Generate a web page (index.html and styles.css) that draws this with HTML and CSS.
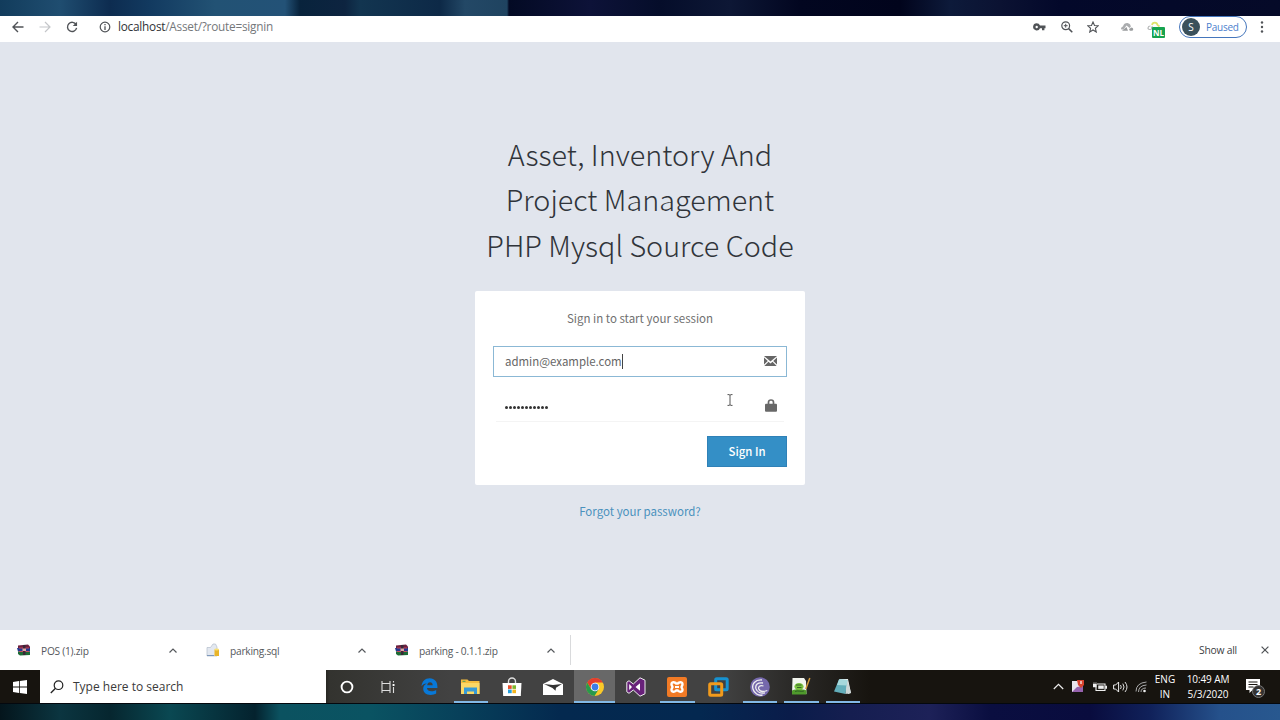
FILE: index.html
```html
<!DOCTYPE html>
<html lang="en">
<head>
<meta charset="utf-8">
<title>Sign in</title>
<link rel="stylesheet" href="styles.css">
</head>
<body>
<svg class="defs" width="0" height="0">
  <symbol id="chev" viewBox="0 0 10 10"><path d="M1.500 7.500 5 4 8.500 7.500" fill="none" stroke="#55585c" stroke-width="1.200"/></symbol>
  <symbol id="rar" viewBox="0 0 14 12">
    <path d="M1 1.500 11 .5 13 2.500V4H1z" fill="#6b2140"/><path d="M0 4h13v3.500H1z" fill="#24388f"/><path d="M1 7.500h12V11L3 11.500 1 10z" fill="#1d6b35"/>
    <path d="M2 4h10M2 7.500h10" stroke="#d0485c" stroke-width=".9"/><path d="M6 1h2.500v10H6z" fill="#3a2838"/><path d="M5.500 4.500h3.500v2.500H5.500z" fill="#e0a8a0"/>
  </symbol>
</svg>
<div class="screen">
  <div class="wallpaper-top"></div>

  <header class="toolbar">
    <nav class="nav">
      <svg width="12" height="12" viewBox="0 0 12 12"><path d="M11.500 6H1.200M6 1 1 6l5 5" fill="none" stroke="#505357" stroke-width="1.400"/></svg>
      <svg width="12" height="12" viewBox="0 0 12 12"><path d="M.5 6h10.300M6 1l5 5-5 5" fill="none" stroke="#c4c6c9" stroke-width="1.200"/></svg>
      <svg width="12" height="12" viewBox="0 0 13 13"><path d="M11 4A5 5 0 1 0 11.500 7.500" fill="none" stroke="#505357" stroke-width="1.500"/><path d="M12 .8V5.500H7.300z" fill="#505357"/></svg>
    </nav>
    <svg class="info" width="12" height="12" viewBox="0 0 12 12"><circle cx="6" cy="6" r="4.800" fill="none" stroke="#505357" stroke-width="1.200"/><path d="M6 5.300V9M6 3v1.300" stroke="#505357" stroke-width="1.300"/></svg>
    <div class="url"><span class="host">localhost</span>/Asset/?route=signin</div>
    <div class="actions">
      <svg class="key" width="13" height="8" viewBox="0 0 13 8"><path d="M3.700.3a3.600 3.600 0 1 0 3.300 5h2V7.300h2.400v-2H12.500V2.600H7A3.600 3.600 0 0 0 3.700.3zm0 2.500a1.200 1.200 0 1 1 0 2.400 1.200 1.200 0 0 1 0-2.400z" fill="#505357" fill-rule="evenodd"/></svg>
      <svg class="mag" width="12" height="12" viewBox="0 0 12 12"><circle cx="4.700" cy="4.700" r="3.900" fill="none" stroke="#505357" stroke-width="1.200"/><path d="m7.600 7.600 3.700 3.700" stroke="#505357" stroke-width="1.500"/><path d="M2.800 4.700h3.800M4.700 2.800v3.800" stroke="#505357" stroke-width="1"/></svg>
      <svg class="star" width="12" height="12" viewBox="0 0 24 24"><path d="m12 2 3 7 7.500.6-5.700 5L18.500 22 12 18l-6.500 4 1.700-7.400-5.700-5L9 9z" fill="none" stroke="#505357" stroke-width="2.200"/></svg>
      <svg class="cloud" width="14" height="10" viewBox="0 0 14 10"><path d="M3 4.500C3.500 1.800 6 .8 8 1.200c2 .4 2.800 2 2.800 3.600L9.500 6 6.500 3.500 3.500 7.500H2C.5 7.500.8 5 3 4.500z" fill="#aaacae"/><path d="M2 8.700h6L6.500 5zM9 7l2.500-1.500c2 .3 2.300 2.700.8 3.200H9.800z" fill="#9b9d9f"/></svg>
      <div class="nl-ext">
        <svg width="14" height="11" viewBox="0 0 14 11"><path d="M4.500 8.500h-2C.3 8.500.5 5 3.500 5M5 8C3.800 7 4.500 5.700 6 6" fill="none" stroke="#b4b6b7" stroke-width="1.200"/><path d="M5 4C5.500.8 10 .8 10.500 4l2 1.500" fill="none" stroke="#dfe36a" stroke-width="1.700"/></svg>
        <span class="nl-badge">NL</span>
      </div>
      <div class="profile"><span class="avatar">S</span><span class="paused">Paused</span></div>
      <svg class="kebab" width="4" height="12" viewBox="0 0 4 12"><g fill="#505357"><circle cx="2" cy="1.500" r="1.200"/><circle cx="2" cy="6" r="1.200"/><circle cx="2" cy="10.500" r="1.200"/></g></svg>
    </div>
  </header>

  <main class="page">
    <h1 class="title">
      <span>Asset, Inventory And</span>
      <span>Project Management</span>
      <span>PHP Mysql Source Code</span>
    </h1>
    <section class="card">
      <p class="lead">Sign in to start your session</p>
      <div class="field focused">
        <span class="value">admin@example.com</span><span class="caret"></span>
        <svg class="field-icon" width="13" height="10" viewBox="0 0 13 10"><path d="M0 0h13L6.500 5.600z" fill="#666"/><path d="M0 1.500 3.800 5 0 8.500zM13 1.500 9.200 5 13 8.500zM.3 10 4.500 5.700l2 1.700 2-1.700L12.700 10z" fill="#666"/></svg>
      </div>
      <div class="field password">
        <span class="dots"><i></i><i></i><i></i><i></i><i></i><i></i><i></i><i></i><i></i><i></i><i></i></span>
        <svg class="field-icon" width="12" height="13" viewBox="0 0 12 13"><path d="M3.500 5.500V3.200Q3.500 1 6 1t2.500 2.200v2.300" fill="none" stroke="#686868" stroke-width="1.700"/><rect y="4.800" width="12" height="8" rx="1" fill="#686868"/></svg>
        <svg class="ibeam" width="6" height="12" viewBox="0 0 6 12"><path d="M.5.6h1.700L3 1.300l.8-.7h1.700M3 1v10M.5 11.400h1.700l.8-.7.8.7h1.700" fill="none" stroke="#555" stroke-width="1"/></svg>
      </div>
      <button class="signin">Sign In</button>
    </section>
    <a class="forgot">Forgot your password?</a>
  </main>

  <div class="downloads">
    <div class="dl dl1"><svg width="14" height="12"><use href="#rar"/></svg><span>POS (1).zip</span><svg class="chev" width="10" height="10"><use href="#chev"/></svg></div>
    <div class="dl dl2"><svg width="14" height="14" viewBox="0 0 14 14"><path d="M1 4.500h3.500L7 1h2.500L11 4v9H1z" fill="#e3e8f0" stroke="#b3bdcb" stroke-width=".7"/><path d="M8.500 6.500h4.500V13H8.500z" fill="#e9b52a"/><ellipse cx="10.700" cy="6.500" rx="2.300" ry="1" fill="#f8df75"/><path d="M1 12.500h7" stroke="#7e98bb"/></svg><span>parking.sql</span><svg class="chev" width="10" height="10"><use href="#chev"/></svg></div>
    <div class="dl dl3"><svg width="14" height="12"><use href="#rar"/></svg><span>parking - 0.1.1.zip</span><svg class="chev" width="10" height="10"><use href="#chev"/></svg></div>
    <div class="showall">Show all</div>
    <svg class="close" width="8" height="8" viewBox="0 0 8 8"><path d="m.6.6 6.800 6.800M7.400.6.6 7.400" stroke="#505357" stroke-width="1.200"/></svg>
  </div>

  <footer class="taskbar">
    <div class="start"><svg width="14" height="14" viewBox="0 0 14 14"><path d="M0 2 6 1.100V6.600H0zM6.800 1 14 0v6.600H6.800zM0 7.400h6v5.500L0 12zM6.800 7.400H14V14L6.800 13z" fill="#fff"/></svg></div>
    <div class="search"><svg width="14" height="14" viewBox="0 0 14 14"><circle cx="8.500" cy="5.200" r="4.300" fill="none" stroke="#222" stroke-width="1.200"/><path d="M5.500 8.300.8 13" stroke="#222" stroke-width="1.300"/></svg><span>Type here to search</span></div>
    <div class="apps">
      <div class="app"><svg width="14" height="14" viewBox="0 0 14 14"><circle cx="7" cy="7" r="5.400" fill="none" stroke="#fff" stroke-width="1.900"/></svg></div>
      <div class="app"><svg width="15" height="14" viewBox="0 0 15 14"><path d="M1 1v2.500h8V1M1 13v-2.500h8V13M1 3.500v7M9 3.500v7M12.500 1v1.500M12.500 7v6" fill="none" stroke="#ddd" stroke-width="1.100"/><path d="M11.600 4h1.900v2h-1.900z" fill="#fff"/></svg></div>
      <div class="app"><svg width="17" height="17" viewBox="0 0 17 17"><path d="M.5 8.200C1 3.500 4 .3 8.700.3c5 0 7.700 3.700 7.700 8v1.800H6c.2 2.300 2 3.200 4.500 3.200 1.800 0 3.300-.5 4.700-1.300v3.600C13.700 16.500 12 17 9.700 17 5 17 2.200 14.500 2.200 10.800c0-2.500 1.400-4.300 3.500-5.300C3.500 5.300 1.700 6.500.5 8.200zM6.200 7.200h5.500c0-2-1-3-2.700-3S6.500 5.500 6.200 7.200z" fill="#0878d7" fill-rule="evenodd"/></svg></div>
      <div class="app open"><svg width="19" height="16" viewBox="0 0 19 16"><path d="M0 .5h6.500L8 2h10.500v13H0z" fill="#f5bd3e"/><path d="M0 4h18.500v11H0z" fill="#fbd866"/><path d="M3 15V8.500h13V15h-3v-2.500H6V15z" fill="#379bd6"/><path d="M1.500 2.300h3" stroke="#4b9c5b"/></svg></div>
      <div class="app"><svg width="20" height="20" viewBox="0 0 20 20"><path d="M6.500 7V4.500a3.500 3.500 0 0 1 7 0V7" fill="none" stroke="#ddd" stroke-width="1.400"/><path d="M.5 6h19l-.7 13H1.200z" fill="#fff"/><path d="M6 8.300h3.700v3.600H6z" fill="#e9502b"/><path d="M10.400 8.300H14v3.600h-3.600z" fill="#7db62e"/><path d="M6 12.600h3.700v3.600H6z" fill="#259fdd"/><path d="M10.400 12.600H14v3.600h-3.600z" fill="#f4b51e"/></svg></div>
      <div class="app"><svg width="20" height="16" viewBox="0 0 20 16"><path d="M0 5 10 0l10 5v11H0z" fill="#fff"/><path d="m1 5 9 1 9-1-6 3.700-.5 3-3-2.700z" fill="#333"/></svg></div>
      <div class="app open active"><svg width="18" height="18" viewBox="0 0 18 18"><circle cx="9" cy="9" r="9" fill="#fbc928"/><path d="M1.200 4.500A9 9 0 0 1 16.800 4.500H9L5 11z" fill="#e33e2f"/><path d="M1.200 4.500A9 9 0 0 0 8.500 18l4.200-6.800L9 13 5 11z" fill="#29994c"/><circle cx="9" cy="9" r="4.300" fill="#fff"/><circle cx="9" cy="9" r="3.400" fill="#3c7de6"/></svg></div>
      <div class="app"><svg width="20" height="20" viewBox="0 0 20 20"><path d="m14 .8 5 2.400v13.600l-5 2.400L7.300 13 3 16.300l-2.200-1.500V5.200L3 3.700 7.300 7z" fill="#68217a" stroke="#eee" stroke-width="1"/><path d="M3.200 7v6L6 10zM14 6.300 9.500 10l4.500 3.700z" fill="#fff"/></svg></div>
      <div class="app open"><svg width="20" height="20" viewBox="0 0 20 20"><rect width="20" height="20" rx="2" fill="#f17a25"/><g fill="none" stroke="#fff" stroke-width="2.400" stroke-linejoin="round"><path d="M10 7.500C8.500 4.500 4.500 4.500 4.500 7.200c0 1.600 1 1.800 1 2.800s-1 1.300-1 2.800c0 2.700 4 2.700 5.500-.3M10 7.500c1.500-3 5.500-3 5.500-.3 0 1.600-1 1.800-1 2.800s1 1.300 1 2.800c0 2.700-4 2.700-5.500-.3"/><path d="M8 10h4" stroke-width="2"/></g></svg></div>
      <div class="app"><svg width="21" height="20" viewBox="0 0 21 20"><rect x="7.700" y="1.700" width="11.500" height="11" rx="1" fill="none" stroke="#1792d1" stroke-width="3"/><rect x="1.700" y="6.700" width="12" height="11.500" rx="1" fill="none" stroke="#f19a1c" stroke-width="3"/><path d="M7.700 9v3.700H12" fill="none" stroke="#1792d1" stroke-width="2"/></svg></div>
      <div class="app open"><svg width="20" height="20" viewBox="0 0 20 20"><circle cx="10" cy="10" r="9.800" fill="#7568ac"/><path d="M12 3C5 2.500 1.500 7 3 12c1.200 4.500 5.500 7 9.500 6M13 6C8 5 4.800 8 6 11.800c1.200 3.500 5 5 9 4M13.500 9C10 8 8 9.500 8.800 12c1 2.500 4.500 3 8.500 1.500" fill="none" stroke="#eee" stroke-width="1.300"/></svg></div>
      <div class="app open"><svg width="20" height="19" viewBox="0 0 20 19"><path d="M1.500 1H13l2 3 .5 13H1z" fill="#f2f5ee"/><path d="M1 13.500c5-2 9-2 14.500 0v4H1z" fill="#4f9a2c"/><ellipse cx="8" cy="9.500" rx="4.600" ry="3.600" fill="#79c23e"/><path d="M5 8h5.500M6 10.500h4.500M4 14.500c3-1.500 6 .8 9-.5" stroke="#2d5a24" stroke-width=".9" fill="none"/><path d="m18.800 1-4 11" stroke="#d39b3b" stroke-width="1.500"/></svg></div>
      <div class="app open"><svg width="19" height="18" viewBox="0 0 19 18"><path d="M6 1h9l3 14-3 1z" fill="#e8eeee"/><path d="M6 1.500 14.500 2l-2 14L1 13.500z" fill="#63aeba"/><path d="M6 1.500 14.500 2l-.8 5.500L4 7z" fill="#a6d8dc"/><path d="M14.500 2 18 15l-5.500 1z" fill="#cbd6d6"/></svg></div>
    </div>
    <div class="tray">
      <svg class="t-chev" width="11" height="7" viewBox="0 0 11 7"><path d="m.8 6 4.700-4.700L10.200 6" fill="none" stroke="#eee" stroke-width="1.200"/></svg>
      <svg class="t-app" width="13" height="13" viewBox="0 0 13 13"><path d="M0 1h11v11H0z" fill="#e8e4ee"/><path d="M0 12 5 7l6-1v6z" fill="#9662ad"/><path d="M5 0h7v5L9 8 6 5z" fill="#d8422d"/><path d="M9 1v3" stroke="#fff" stroke-width="1.200"/></svg>
      <svg class="t-bat" width="14" height="10" viewBox="0 0 14 10"><path d="M4 2h8v6.500H3V5" fill="none" stroke="#eee" stroke-width="1.100"/><path d="M5.500 3.700h5v3h-5zM12.500 4h1.500v2.500h-1.500zM0 2h3.500v3H0zM1 0v2M3 0v2" fill="#eee" stroke="#eee" stroke-width=".5"/></svg>
      <svg class="t-vol" width="15" height="12" viewBox="0 0 15 12"><path d="M.6 4h2l3-3v10l-3-3h-2z" fill="none" stroke="#eee"/><path d="M7.500 4q1.500 2 0 4M9.800 2.600q2.500 3.400 0 6.800M12 1q4 5 0 10" fill="none" stroke="#ddd"/></svg>
      <svg class="t-wifi" width="12" height="12" viewBox="0 0 12 12"><path d="M1 10.500Q1 2 11.500 1M3.500 11Q3.500 4.500 11.500 4M6 11q0-4 5-4" fill="none" stroke="#aaa" stroke-width="1"/><circle cx="9.500" cy="10" r="1.300" fill="#eee"/></svg>
      <div class="lang"><span>ENG</span><span>IN</span></div>
      <div class="clock"><span>10:49 AM</span><span>5/3/2020</span></div>
      <div class="note"><svg width="14" height="14" viewBox="0 0 14 14"><path d="M0 0h14v11H6.500l-3 3v-3H0z" fill="#fff"/><path d="M2.500 3h9M2.500 5.500h9M2.500 8h5" stroke="#17140f" stroke-width="1"/></svg><span class="count">2</span></div>
    </div>
  </footer>
  <div class="wallpaper-bottom"></div>
</div>
</body>
</html>
```
FILE: styles.css
```css
* { box-sizing: border-box; }
body { margin: 0; font-family: "Open Sans", "Noto Sans", sans-serif; }
svg { display: block; flex: none; }
.defs { position: absolute; }
.screen { width: 1280px; height: 720px; overflow: hidden; display: flex; flex-direction: column; }
.screen > * { flex: none; }

.wallpaper-top { height: 16px; background: linear-gradient(90deg, #123c5c 0, #1f4d70 60px, #0d2c50 110px, #123a60 150px, #225274 215px, #235277 285px, #08233c 300px, #0d2440 345px, #123550 360px, #0d2947 440px, #234866 465px, #1f4360 507px, #030a24 509px, #0d1238 590px, #050d2a 660px, #0d1735 730px, #020620 800px, #01041c 900px, #0d1a3a 950px, #0b1232 1000px, #03082a 1060px, #050a28 1280px); }
.wallpaper-bottom { height: 17px; border-top: 1px solid #04080e; background: linear-gradient(90deg, #04151c 0, #0b3540 60px, #06262f 110px, #0a4852 170px, #04222e 255px, #0b5260 280px, #0a5362 370px, #07405a 460px, #04294f 560px, #042850 700px, #0a1c4a 790px, #151e50 850px, #1d2158 930px, #0a0e40 990px, #090c3e 1090px, #10215a 1150px, #25518b 1220px, #28588f 1280px); }

.toolbar { height: 26px; background: #fff; display: flex; align-items: center; padding: 0 16px 4px 12px; }
.nav { display: flex; align-items: center; width: 87px; gap: 15px; }
.url { margin: 0 0 2px 7px; font-size: 11.800px; line-height: 16px; letter-spacing: -.24px; color: #75787b; }
.host { color: #303236; }
.actions { margin-left: auto; display: flex; align-items: center; }
.mag { margin-left: 15px; }
.star { margin-left: 14px; }
.cloud { margin-left: 21px; }
.nl-ext { position: relative; margin-left: 13px; width: 18px; height: 12px; }
.nl-badge { position: absolute; left: 5px; top: 6px; width: 13px; height: 11px; background: #16a34f; color: #fff; font: 700 8px/11px "Open Sans", sans-serif; text-align: center; border-radius: 1px; }
.profile { margin-left: 14px; width: 68px; height: 22px; border: 1px solid #4576bc; border-radius: 11px; display: flex; align-items: center; padding-left: 2px; }
.avatar { width: 18px; height: 18px; border-radius: 50%; background: #3b515b; color: #fff; font-size: 10px; line-height: 18px; text-align: center; }
.paused { margin: 0 0 1px 6px; font-size: 10px; line-height: 16px; color: #4c80cd; letter-spacing: -.25px; }
.kebab { margin-left: 13px; }

.page { height: 588px; background: #e1e5ed; display: flex; flex-direction: column; align-items: center; padding-top: 89px; font-family: "Noto Sans CJK SC", sans-serif; }
.title { margin: 0; font-weight: 300; font-size: 28.750px; line-height: 45.300px; color: #30343a; text-align: center; }
.title span { display: block; white-space: nowrap; }
.card { margin-top: 24.100px; width: 330px; height: 194px; background: #fff; border-radius: 2px; padding: 18px; display: flex; flex-direction: column; }
.lead { margin: 0; font-size: 11.500px; line-height: 19px; color: #707070; text-align: center; }
.field { display: flex; align-items: center; height: 31px; border: 1px solid transparent; padding: 0 9px 0 11px; font-size: 11.450px; color: #666; width: 294px; position: relative; }
.field-icon { margin-left: auto; }
.focused { margin-top: 18px; border-color: #8bb8d5; }
.focused .field-icon { margin-bottom: 1px; }
.value { line-height: 20px; margin-bottom: 1px; }
.caret { width: 1px; height: 15px; background: #444; }
.password { margin-top: 14px; }
.password .field-icon { margin-bottom: 2px; }
.password::after { content: ""; height: 1px; background: #f4f4f4; position: absolute; left: 2px; right: 2px; bottom: -1px; }
.dots { display: flex; gap: 1px; margin-top: 2px; }
.dots i { width: 3px; height: 3px; border-radius: 50%; background: #333; }
.ibeam { position: absolute; left: 233px; top: 2px; }
.signin { margin: 14px 0 0 auto; width: 80px; height: 31px; border: 1px solid #2f81b7; background: #348fc6; color: #fff; font: 500 11.400px/20px "Noto Sans CJK SC", sans-serif; padding: 0 0 1px; }
.forgot { margin-top: 16px; font-size: 11.500px; line-height: 20px; color: #4a91bd; }

.downloads { height: 40px; background: #fff; display: flex; align-items: center; padding-right: 11px; font-size: 10.200px; color: #55585c; }
.dl { display: flex; align-items: center; }
.dl span { margin: 1px 0 0 10px; line-height: 16px; letter-spacing: -.25px; }
.dl .chev { margin-left: auto; }
.dl1 { width: 190px; padding: 0 12px 0 17px; }
.dl2 { width: 189px; padding: 0 12px 0 16px; }
.dl3 { width: 192px; height: 30px; padding: 0 14px 0 16px; border-right: 1px solid #d9dadc; }
.showall { margin-left: auto; font-size: 10.300px; line-height: 16px; letter-spacing: -.22px; color: #3c4043; }
.close { margin-left: 24px; }

.taskbar { height: 33px; display: flex; background: linear-gradient(90deg, #17140f 0, #17140f 320px, #33332f 330px, #424242 450px, #424242 720px, #2b2a28 790px, #17140f 870px); color: #fff; }
.start { width: 40px; display: flex; align-items: center; justify-content: center; }
.search { width: 286px; background: #fff; display: flex; align-items: center; padding-left: 10px; color: #3a3a3a; font-size: 12px; }
.search span { margin-left: 9px; }
.apps { display: grid; grid-template-columns: repeat(13, 41.350px); }
.app { display: flex; align-items: center; justify-content: center; position: relative; }
.app.open::after { content: ""; position: absolute; left: 3.600px; right: 3.600px; bottom: 0; height: 2px; background: #82b9e6; }
.app.active { background: #686868; }
.app.active::after { left: 0; right: 0; }
.tray { margin-left: auto; display: flex; align-items: center; padding-right: 14px; }
.t-app { margin-left: 8px; }
.t-bat { margin-left: 8px; }
.t-vol { margin-left: 6px; }
.t-wifi { margin-left: 7px; }
.lang, .clock { display: flex; flex-direction: column; align-items: center; font-size: 10px; line-height: 15px; }
.lang { width: 30px; margin-left: 3px; }
.clock { width: 56px; letter-spacing: -.1px; }
.note { position: relative; margin-left: 10px; width: 20px; height: 16px; }
.count { position: absolute; left: 6px; top: 6px; width: 13px; height: 13px; border-radius: 50%; background: #343230; border: 1px solid #777; font: 700 9px/11px "Open Sans", sans-serif; text-align: center; }
```
